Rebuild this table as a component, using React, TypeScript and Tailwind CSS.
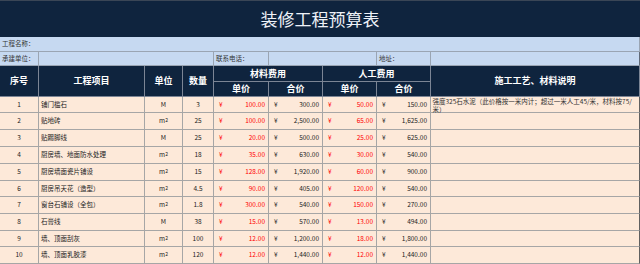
import React from "react";

type Row = [string, string, string, string, string, string, string, string];

const rows: Row[] = [
  ["1", "铺门槛石", "M", "3", "100.00", "300.00", "50.00", "150.00"],
  ["2", "贴地砖", "m²", "25", "100.00", "2,500.00", "65.00", "1,625.00"],
  ["3", "贴踢脚线", "M", "25", "20.00", "500.00", "25.00", "625.00"],
  ["4", "厨房墙、地面防水处理", "m²", "18", "35.00", "630.00", "30.00", "540.00"],
  ["5", "厨房墙面瓷片铺设", "m²", "15", "128.00", "1,920.00", "60.00", "900.00"],
  ["6", "厨房吊天花（造型）", "m²", "4.5", "90.00", "405.00", "120.00", "540.00"],
  ["7", "窗台石铺设（全包）", "m²", "1.8", "300.00", "540.00", "150.00", "270.00"],
  ["8", "石膏线", "M", "38", "15.00", "570.00", "13.00", "494.00"],
  ["9", "墙、顶面刮灰", "m²", "100", "12.00", "1,200.00", "18.00", "1,800.00"],
  ["10", "墙、顶面乳胶漆", "m²", "120", "12.00", "1,440.00", "12.00", "1,440.00"],
];

const font = { fontFamily: "'Noto Sans CJK SC', 'Liberation Sans', sans-serif" };

const hd =
  "bg-[#0f243e] text-white font-bold text-[9px] flex items-center justify-center border-r border-b border-[#7c8595]";
const blue = "bg-[#c6d9f1] border-r border-b border-[#9aa5b3] text-[6.5px] text-[#333] flex items-center pl-[2px]";
const cell = "bg-[#fde9d9] border-r border-b border-[#a6a6a6] text-[6.5px] text-[#222] flex items-center";

function Price({ v, red }: { v: string; red?: boolean }) {
  return (
    <div className={`${cell} justify-between pl-[5px] pr-[3px] ${red ? "text-[#ff0000]" : ""}`}>
      <span>¥</span>
      <span>{v}</span>
    </div>
  );
}

function Unit({ u }: { u: string }) {
  return (
    <div className={`${cell} justify-center`}>
      {u === "m²" ? (
        <span>
          m<sup className="text-[5px] relative top-[-1px]">2</sup>
        </span>
      ) : (
        <span>{u}</span>
      )}
    </div>
  );
}

export default function App() {
  return (
    <div className="w-[640px] h-[264px] overflow-hidden bg-white" style={font}>
      <div className="grid grid-cols-[39px_106px_38px_31px_55px_54px_54px_54px_209px] grid-rows-[37px_15px_14px_16px_15px_16px_17px_17px_17px_17px_16px_17px_17px_16px_17px]">
        <div className="col-span-9 bg-[#0f243e] border-t border-[#3a4656] flex items-center justify-center text-[17px] text-[#eef2f8]">
          装修工程预算表
        </div>
        <div className={`col-span-9 ${blue}`}>工程名称：</div>
        <div className={blue}>承建单位：</div>
        <div className={`col-span-3 ${blue}`}></div>
        <div className={blue}>联系电话：</div>
        <div className={`col-span-2 ${blue}`}></div>
        <div className={blue}>地址：</div>
        <div className={`${blue} border-r-[#606a78]`}></div>

        <div className={`row-span-2 ${hd}`}>序号</div>
        <div className={`row-span-2 ${hd}`}>工程项目</div>
        <div className={`row-span-2 ${hd}`}>单位</div>
        <div className={`row-span-2 ${hd}`}>数量</div>
        <div className={`col-span-2 ${hd}`}>材料费用</div>
        <div className={`col-span-2 ${hd}`}>人工费用</div>
        <div className={`row-span-2 ${hd}`}>施工工艺、材料说明</div>
        <div className={hd}>单价</div>
        <div className={hd}>合价</div>
        <div className={hd}>单价</div>
        <div className={hd}>合价</div>

        {rows.map((r, i) => (
          <React.Fragment key={i}>
            <div className={`${cell} justify-center`}>{r[0]}</div>
            <div className={`${cell} pl-[2px]`}>{r[1]}</div>
            <Unit u={r[2]} />
            <div className={`${cell} justify-center`}>{r[3]}</div>
            <Price v={r[4]} red />
            <Price v={r[5]} />
            <Price v={r[6]} red />
            <Price v={r[7]} />
            {i === 0 ? (
              <div className="bg-[#fde9d9] border-r border-b border-[#a6a6a6] border-r-[#606060] text-[6.5px] text-[#333] leading-[8px] pl-[1.5px] pr-[1px] pt-[0px] whitespace-normal break-all">
                强度325石水泥（此价格按一米内计；超过一米人工45/米，材料按75/米）
              </div>
            ) : (
              <div className={`${cell} border-r-[#606060]`}></div>
            )}
          </React.Fragment>
        ))}
      </div>
    </div>
  );
}
